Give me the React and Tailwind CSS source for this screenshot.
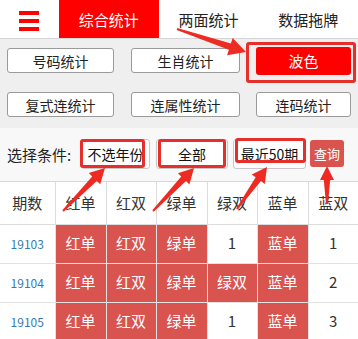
import React from "react";

const FONT = { fontFamily: '"Noto Sans CJK SC", "Noto Sans", sans-serif' };

function arrowPoints(tx, ty, px, py, headLen = 15, headW = 8, tailW = 1, neckW = 3.2) {
  const dx = px - tx, dy = py - ty;
  const L = Math.hypot(dx, dy);
  const ux = dx / L, uy = dy / L;
  const nx = -uy, ny = ux;
  const bx = px - ux * headLen, by = py - uy * headLen;
  const pts = [
    [tx + nx * tailW, ty + ny * tailW],
    [bx + nx * neckW, by + ny * neckW],
    [bx + nx * headW, by + ny * headW],
    [px, py],
    [bx - nx * headW, by - ny * headW],
    [bx - nx * neckW, by - ny * neckW],
    [tx - nx * tailW, ty - ny * tailW],
  ];
  return pts.map((p) => p.map((v) => v.toFixed(1)).join(",")).join(" ");
}

const arrows = [
  [177, 29, 246, 52, 17, 9],
  [63, 211, 105, 168, 15, 8],
  [153, 211, 194, 168, 15, 8],
  [237, 209, 267, 167, 15, 8],
  [327, 204, 327, 166, 14, 7],
];

function Btn({ children, w }) {
  return (
    <div
      className={`${w} h-[25px] bg-white border border-[#9a9a9a] rounded-[3px] flex items-center justify-center text-[14px] text-[#222] leading-none`}
    >
      {children}
    </div>
  );
}

const rows = [
  ["19103", "红单", "红双", "绿单", "1", "蓝单", "1"],
  ["19104", "红单", "红双", "绿单", "绿双", "蓝单", "2"],
  ["19105", "红单", "红双", "绿单", "1", "蓝单", "3"],
];

export default function App() {
  return (
    <div className="relative w-[358px] h-[339px] overflow-hidden bg-white" style={FONT}>
      {/* top bar */}
      <div className="flex h-[39px] bg-white border-b border-[#d5d5d5]">
        <div className="w-[59px] h-full pl-[19px] pt-[11px]">
          <div className="flex flex-col gap-[4px]">
            <div className="w-[20px] h-[4px] bg-[#f00]" />
            <div className="w-[20px] h-[4px] bg-[#f00]" />
            <div className="w-[20px] h-[4px] bg-[#f00]" />
          </div>
        </div>
        <div className="w-[100px] h-[38px] bg-[#f00] text-white text-[15px] flex items-center justify-center leading-none">
          综合统计
        </div>
        <div className="w-[100px] h-[38px] text-[#222] text-[15px] flex items-center justify-center leading-none">
          两面统计
        </div>
        <div className="w-[100px] h-[38px] text-[#222] text-[15px] flex items-center justify-center leading-none">
          数据拖牌
        </div>
      </div>

      {/* buttons */}
      <div className="bg-[#efefef] pt-[9px] pb-[11px] pl-[7px] flex flex-col gap-[19px] h-[89px]">
        <div className="flex items-center h-[25px]">
          <Btn w="w-[107px]">号码统计</Btn>
          <div className="w-[17px]" />
          <Btn w="w-[109px]">生肖统计</Btn>
          <div className="w-[16px]" />
          <div className="w-[95px] h-[28px] bg-[#f00] rounded-[3px] flex items-center justify-center text-white text-[15px] leading-none">
            波色
          </div>
        </div>
        <div className="flex items-center h-[25px]">
          <Btn w="w-[107px]">复式连统计</Btn>
          <div className="w-[17px]" />
          <Btn w="w-[109px]">连属性统计</Btn>
          <div className="w-[16px]" />
          <Btn w="w-[95px]">连码统计</Btn>
        </div>
      </div>

      {/* filter */}
      <div className="bg-[#f8f8f8] h-[54px] flex items-center pl-[7px] border-b border-[#d8d8d8]">
        <span className="text-[15px] text-[#222] leading-none w-[74px]">选择条件:</span>
        <div className="w-[69px] h-[30px] bg-white border border-[#c8c8c8] rounded-[3px] flex items-center justify-center text-[14px] text-[#111] leading-none -mt-[2px]">
          不选年份
        </div>
        <div className="w-[6px]" />
        <div className="w-[72px] h-[30px] bg-white border border-[#c8c8c8] rounded-[3px] flex items-center justify-center text-[14px] text-[#111] leading-none -mt-[2px]">
          全部
        </div>
        <div className="w-[5px]" />
        <div className="w-[73px] h-[30px] bg-white border border-[#c8c8c8] rounded-[3px] flex items-center justify-center text-[14px] text-[#111] leading-none -mt-[2px]">
          最近50期
        </div>
        <div className="w-[4px]" />
        <div className="w-[34px] h-[27px] bg-[#d9534f] rounded-[3px] flex items-center justify-center text-[13px] text-white leading-none -mt-[2px]">
          查询
        </div>
      </div>

      {/* table */}
      <table className="w-[358px] table-fixed border-collapse">
        <colgroup>
          <col className="w-[55px]" />
          <col className="w-[51px]" />
          <col className="w-[50px]" />
          <col className="w-[51px]" />
          <col className="w-[50px]" />
          <col className="w-[51px]" />
          <col className="w-[50px]" />
        </colgroup>
        <thead>
          <tr className="h-[42px]">
            {["期数", "红单", "红双", "绿单", "绿双", "蓝单", "蓝双"].map((h, i) => (
              <th
                key={i}
                className="border border-[#dcdcdc] first:border-l-0 last:border-r-0 border-t-0 font-normal text-[15px] text-[#333] text-center p-0"
              >
                {h}
              </th>
            ))}
          </tr>
        </thead>
        <tbody>
          {rows.map((r, ri) => (
            <tr key={ri} className="h-[39px]">
              {r.map((c, ci) => {
                const red = /[单双]/.test(c);
                const cls =
                  ci === 0
                    ? "text-[12px] text-[#337ab7]"
                    : red
                    ? "bg-[#d9534f] text-white text-[15px]"
                    : "text-[15px] text-[#333]";
                return (
                  <td
                    key={ci}
                    className={`border border-[#e2e2e2] first:border-l-0 last:border-r-0 text-center p-0 ${cls}`}
                  >
                    {c}
                  </td>
                );
              })}
            </tr>
          ))}
        </tbody>
      </table>

      {/* annotations */}
      <div className="absolute left-[246px] top-[42px] w-[110px] h-[41px] border-[3px] border-[#e62e2a] rounded-[3px]" />
      <div className="absolute left-[80px] top-[139px] w-[65px] h-[29px] border-[3px] border-[#e62e2a] rounded-[3px]" />
      <div className="absolute left-[158px] top-[139px] w-[68px] h-[29px] border-[3px] border-[#e62e2a] rounded-[3px]" />
      <div className="absolute left-[235px] top-[138px] w-[71px] h-[25px] border-[3px] border-[#e62e2a] rounded-[3px]" />
      <svg className="absolute inset-0 pointer-events-none" width="358" height="339">
        {arrows.map((a, i) => (
          <polygon key={i} points={arrowPoints(a[0], a[1], a[2], a[3], a[4], a[5])} fill="#ee2b23" />
        ))}
      </svg>
    </div>
  );
}
